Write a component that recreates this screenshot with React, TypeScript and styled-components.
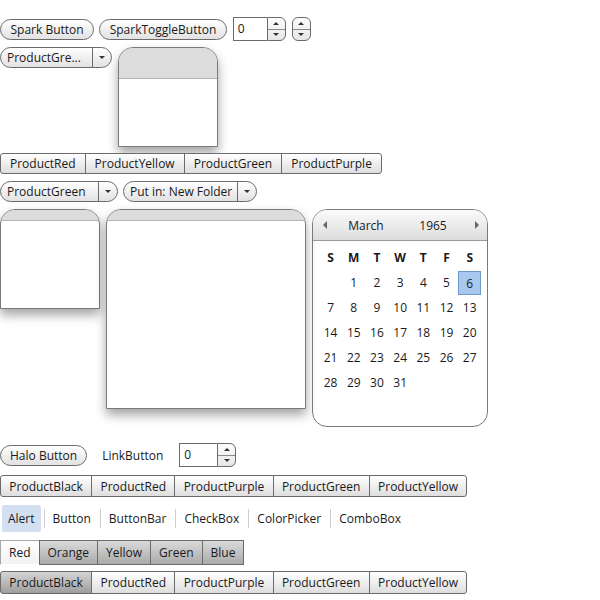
import React from 'react';
import styled, { createGlobalStyle, css } from 'styled-components';

const GlobalStyle = createGlobalStyle`
  html, body { margin: 0; padding: 0; background: #fff; }
  body {
    font-family: 'Open Sans', 'Noto Sans', sans-serif;
    font-size: 12px;
    color: #1a1a1a;
  }
  button { font-family: inherit; font-size: 12px; color: #1a1a1a; cursor: default; }
`;

const Page = styled.div`
  padding-top: 17px;
  display: flex;
  flex-direction: column;
  align-items: flex-start;
`;

const Row = styled.div<{ $mt?: number; $gap?: number; $align?: string }>`
  display: flex;
  align-items: ${(p) => p.$align || 'center'};
  gap: ${(p) => p.$gap ?? 5}px;
  margin-top: ${(p) => p.$mt ?? 0}px;
`;

// --- pill buttons ---

const PillButton = styled.button<{ $pad?: number }>`
  height: 21px;
  padding: 0 ${(p) => p.$pad ?? 9.5}px;
  border: 1px solid #6b6b6b;
  border-radius: 11px;
  background: linear-gradient(#ffffff, #e2e2e2);
  line-height: 19px;
  white-space: nowrap;
`;

const LinkButton = styled.button`
  height: 21px;
  padding: 0 10px;
  border: none;
  background: transparent;
  margin-left: 5px;
`;

// --- numeric stepper / spinner ---

const Stepper = styled.div<{ $ml?: number }>`
  display: flex;
  height: 24px;
  margin-left: ${(p) => p.$ml ?? 0}px;
`;

const StepInput = styled.div<{ $w: number }>`
  width: ${(p) => p.$w}px;
  box-sizing: border-box;
  border: 1px solid #6b6b6b;
  border-right: none;
  background: #fff;
  padding-left: 4px;
  line-height: 22px;
`;

const Spinner = styled.div<{ $round?: boolean; $ml?: number }>`
  width: 19px;
  height: 24px;
  box-sizing: border-box;
  margin-left: ${(p) => p.$ml ?? 0}px;
  border: 1px solid #6b6b6b;
  border-radius: ${(p) => (p.$round ? '6px' : '0 6px 6px 0')};
  background: linear-gradient(#fdfdfd, #e6e6e6);
  display: flex;
  flex-direction: column;
  overflow: hidden;
`;

const SpinHalf = styled.div<{ $top?: boolean }>`
  flex: 1;
  display: flex;
  align-items: center;
  justify-content: center;
  ${(p) => p.$top && css`border-bottom: 1px solid #8a8a8a;`}
`;

const Tri = styled.span<{ $dir: 'up' | 'down' | 'left' | 'right'; $size?: number; $color?: string }>`
  display: block;
  width: 0;
  height: 0;
  ${({ $dir, $size = 3, $color = '#333' }) => {
    if ($dir === 'up')
      return css`border-left: ${$size}px solid transparent; border-right: ${$size}px solid transparent; border-bottom: ${$size}px solid ${$color};`;
    if ($dir === 'down')
      return css`border-left: ${$size}px solid transparent; border-right: ${$size}px solid transparent; border-top: ${$size}px solid ${$color};`;
    if ($dir === 'left')
      return css`border-top: ${$size}px solid transparent; border-bottom: ${$size}px solid transparent; border-right: ${$size}px solid ${$color};`;
    return css`border-top: ${$size}px solid transparent; border-bottom: ${$size}px solid transparent; border-left: ${$size}px solid ${$color};`;
  }}
`;

const SpinButtons: React.FC<{ round?: boolean; ml?: number }> = ({ round, ml }) => (
  <Spinner $round={round} $ml={ml}>
    <SpinHalf $top><Tri $dir="up" /></SpinHalf>
    <SpinHalf><Tri $dir="down" /></SpinHalf>
  </Spinner>
);

const NumericStepper: React.FC<{ w: number; ml?: number }> = ({ w, ml }) => (
  <Stepper $ml={ml}>
    <StepInput $w={w}>0</StepInput>
    <SpinButtons />
  </Stepper>
);

// --- drop down ---

const DropDown = styled.div<{ $w?: number }>`
  display: flex;
  height: 21px;
  box-sizing: border-box;
  border: 1px solid #6b6b6b;
  border-radius: 11px;
  background: linear-gradient(#ffffff, #e2e2e2);
  overflow: hidden;
  ${(p) => p.$w && css`width: ${p.$w}px;`}
`;

const DropLabel = styled.div`
  flex: 1;
  padding: 0 5px 0 6px;
  line-height: 19px;
  white-space: nowrap;
`;

const DropArrow = styled.div`
  width: 18px;
  border-left: 1px solid #6b6b6b;
  display: flex;
  align-items: center;
  justify-content: center;
`;

const DropDownList: React.FC<{ label: string; w?: number }> = ({ label, w }) => (
  <DropDown $w={w}>
    <DropLabel>{label}</DropLabel>
    <DropArrow><Tri $dir="down" /></DropArrow>
  </DropDown>
);

// --- panels ---

const Panel = styled.div<{ $w: number; $h: number }>`
  width: ${(p) => p.$w}px;
  height: ${(p) => p.$h}px;
  box-sizing: border-box;
  border: 1px solid #7a7a7a;
  border-radius: 15px 15px 0 0;
  background: #fff;
  box-shadow: 0 6px 11px rgba(0, 0, 0, 0.36);
  overflow: hidden;
  flex-shrink: 0;
`;

const PanelHead = styled.div<{ $h: number }>`
  height: ${(p) => p.$h}px;
  background: #dcdcdc;
  border-bottom: 1px solid #b4b4b4;
  box-sizing: border-box;
`;

// --- button bar ---

const Bar = styled.div`
  display: flex;
  border-radius: 3px;
`;

const BarButton = styled.button<{ $h: number; $pad: number; $sel?: boolean }>`
  height: ${(p) => p.$h}px;
  padding: 0 ${(p) => p.$pad}px;
  border: 1px solid #6b6b6b;
  margin-left: -1px;
  background: ${(p) => (p.$sel ? 'linear-gradient(#d4d4d4, #9e9e9e)' : 'linear-gradient(#ffffff, #dedede)')};
  white-space: nowrap;
  &:first-child { margin-left: 0; border-radius: 3px 0 0 3px; }
  &:last-child { border-radius: 0 3px 3px 0; }
`;

const ButtonBar: React.FC<{ items: string[]; h: number; pad: number; sel?: number }> = ({ items, h, pad, sel }) => (
  <Bar>
    {items.map((t, i) => (
      <BarButton key={t} $h={h} $pad={pad} $sel={i === sel}>{t}</BarButton>
    ))}
  </Bar>
);

// --- link bar ---

const LinkBarWrap = styled.div`
  display: flex;
  align-items: center;
  height: 27px;
  padding-left: 2px;
`;

const LinkItem = styled.div<{ $sel?: boolean }>`
  height: 27px;
  line-height: 27px;
  padding: 0 6px;
  border-radius: 2px;
  background: ${(p) => (p.$sel ? '#d3e0f1' : 'transparent')};
`;

const LinkSep = styled.div`
  width: 1px;
  height: 19px;
  background: #cfcfcf;
  margin: 0 2px 0 3px;
`;

// --- tab bar ---

const Tabs = styled.div`
  display: flex;
`;

const Tab = styled.div<{ $sel?: boolean }>`
  height: 25px;
  box-sizing: border-box;
  line-height: 23px;
  padding: 0 8px;
  border: 1px solid #6b6b6b;
  margin-left: -1px;
  background: ${(p) => (p.$sel ? 'linear-gradient(#ffffff, #f2f2f2)' : 'linear-gradient(#dadada, #aaaaaa)')};
  ${(p) => p.$sel && css`border-color: #a8a8a8; border-bottom-color: transparent;`}
  &:first-child { margin-left: 0; }
`;

// --- calendar ---

const Calendar = styled.div`
  width: 176px;
  height: 218px;
  box-sizing: border-box;
  border: 1px solid #7a7a7a;
  border-radius: 15px;
  overflow: hidden;
`;

const CalHead = styled.div`
  height: 31px;
  box-sizing: border-box;
  background: linear-gradient(#fbfbfb, #dcdcdc);
  border-bottom: 1px solid #9a9a9a;
  display: grid;
  grid-template-columns: 18px 50px 84px 1fr;
  align-items: center;
  padding: 0 9px 0 10px;
`;

const CalTitle = styled.span`
  text-align: center;
`;

const CalArrowEnd = styled.span`
  justify-self: end;
`;

const CalGrid = styled.div`
  display: grid;
  grid-template-columns: repeat(7, 23.2px);
  grid-auto-rows: 25px;
  padding: 4px 0 0 6px;
`;

const CalCell = styled.div<{ $head?: boolean; $sel?: boolean }>`
  display: flex;
  align-items: center;
  justify-content: center;
  font-weight: ${(p) => (p.$head ? 700 : 400)};
  box-sizing: border-box;
  ${(p) =>
    p.$sel &&
    css`
      background: #a9c8f0;
      border: 1px solid #6f98cf;
      margin: 1px 0 0 0;
    `}
`;

const days = ['S', 'M', 'T', 'W', 'T', 'F', 'S'];
const dates: (number | null)[] = [null, ...Array.from({ length: 31 }, (_, i) => i + 1)];
const products5 = ['ProductBlack', 'ProductRed', 'ProductPurple', 'ProductGreen', 'ProductYellow'];

export default function App() {
  return (
    <Page>
      <GlobalStyle />
      <Row $gap={5}>
        <PillButton>Spark Button</PillButton>
        <PillButton>SparkToggleButton</PillButton>
        <NumericStepper w={34} ml={1} />
        <SpinButtons round ml={1} />
      </Row>

      <Row $mt={6} $gap={6} $align="flex-start">
        <DropDownList label="ProductGre..." w={112} />
        <Panel $w={100} $h={100}>
          <PanelHead $h={31} />
        </Panel>
      </Row>

      <Row $mt={6}>
        <ButtonBar items={['ProductRed', 'ProductYellow', 'ProductGreen', 'ProductPurple']} h={21} pad={9} />
      </Row>

      <Row $mt={7} $gap={5}>
        <DropDownList label="ProductGreen" w={118} />
        <DropDownList label="Put in: New Folder" />
      </Row>

      <Row $mt={7} $gap={6} $align="flex-start">
        <Panel $w={100} $h={100}>
          <PanelHead $h={11} />
        </Panel>
        <Panel $w={200} $h={200}>
          <PanelHead $h={11} />
        </Panel>
        <Calendar>
          <CalHead>
            <Tri $dir="left" $size={4} $color="#666" />
            <CalTitle>March</CalTitle>
            <CalTitle>1965</CalTitle>
            <CalArrowEnd><Tri $dir="right" $size={4} $color="#666" /></CalArrowEnd>
          </CalHead>
          <CalGrid>
            {days.map((d, i) => (
              <CalCell key={'d' + i} $head>{d}</CalCell>
            ))}
            {dates.map((d, i) => (
              <CalCell key={'n' + i} $sel={d === 6}>{d ?? ''}</CalCell>
            ))}
          </CalGrid>
        </Calendar>
      </Row>

      <Row $mt={16} $gap={0}>
        <PillButton $pad={9}>Halo Button</PillButton>
        <LinkButton>LinkButton</LinkButton>
        <NumericStepper w={38} ml={6} />
      </Row>

      <Row $mt={8}>
        <ButtonBar items={products5} h={22} pad={8.3} />
      </Row>

      <Row $mt={8}>
        <LinkBarWrap>
          {['Alert', 'Button', 'ButtonBar', 'CheckBox', 'ColorPicker', 'ComboBox'].map((t, i) => (
            <React.Fragment key={t}>
              {i > 0 && <LinkSep />}
              <LinkItem $sel={i === 0}>{t}</LinkItem>
            </React.Fragment>
          ))}
        </LinkBarWrap>
      </Row>

      <Row $mt={8}>
        <Tabs>
          {['Red', 'Orange', 'Yellow', 'Green', 'Blue'].map((t, i) => (
            <Tab key={t} $sel={i === 0}>{t}</Tab>
          ))}
        </Tabs>
      </Row>

      <Row $mt={6}>
        <ButtonBar items={products5} h={23} pad={8.3} sel={0} />
      </Row>
    </Page>
  );
}
